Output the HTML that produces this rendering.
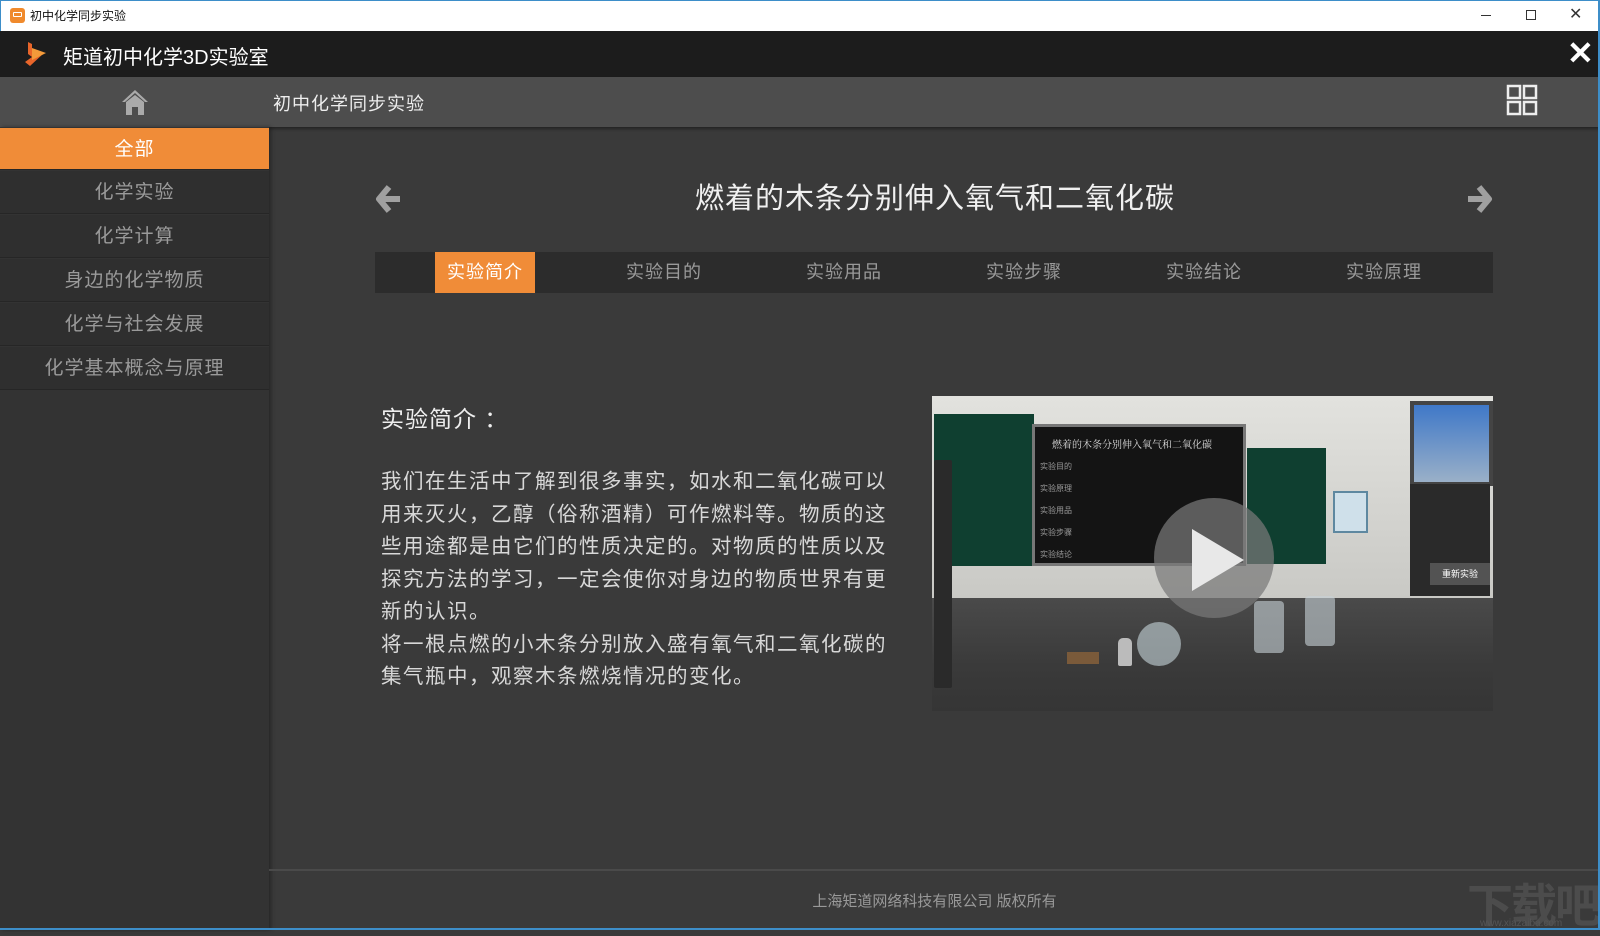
<!DOCTYPE html>
<html><head><meta charset="utf-8"><style>
*{margin:0;padding:0;box-sizing:border-box}
body{width:1600px;height:930px;overflow:hidden;background:#3a3a3a;font-family:"Liberation Sans","Noto Sans CJK SC",sans-serif;position:relative}
.abs{position:absolute}
#tb{left:0;top:0;width:1600px;height:31px;background:#fff;border:1px solid #3d8ec9;border-bottom:none}
#hd{left:0;top:31px;width:1600px;height:46px;background:#1c1c1c}
#nav{left:0;top:77px;width:1600px;height:50px;background:#4d4d4d;box-shadow:0 2px 3px rgba(0,0,0,.4)}
#side{left:0;top:127px;width:269px;height:803px;background:#333;box-shadow:2px 0 4px rgba(0,0,0,.35)}
.it{position:absolute;left:0;width:269px;height:43px;background:#2f2f2f;color:#9a9a9a;font-size:19px;letter-spacing:1px;text-align:center;line-height:43px;border-bottom:1px solid #262626}
.tab{position:absolute;top:0;height:41px;line-height:41px;font-size:18px;letter-spacing:1px;color:#9a9a9a;text-align:center;width:100px}
p.t{position:absolute;left:381px;top:466px;width:510px;font-size:20.5px;letter-spacing:1.5px;line-height:32.5px;color:#d8d8d8}
</style></head><body>
<div id="tb" class="abs">
 <div class="abs" style="left:9px;top:7px;width:15px;height:15px;background:#f08a2c;border-radius:3px"><div style="margin:4px 3px;width:9px;height:5px;border:1px solid #fff;border-radius:1px"></div></div>
 <div class="abs" style="left:29px;top:6px;font-size:12px;color:#111">初中化学同步实验</div>
 <div class="abs" style="left:1480px;top:14px;width:10px;height:1px;background:#333"></div>
 <div class="abs" style="left:1525px;top:9px;width:10px;height:10px;border:1px solid #333"></div>
 <div class="abs" style="left:1568px;top:3px;font-size:16px;color:#333">✕</div>
</div>
<div id="hd" class="abs">
 <svg class="abs" style="left:22px;top:9px" width="28" height="28" viewBox="0 0 28 28"><path d="M6 2 L10 4 L10 14 L22 13 L8 26 L3 22 L10 17 L6 14Z" fill="#e8652a"/><path d="M10 8 L24 13 L10 20Z" fill="#f39a3a"/></svg>
 <div class="abs" style="left:63px;top:10px;font-size:20px;color:#fff">矩道初中化学3D实验室</div>
 <div class="abs" style="left:1567px;top:3px;font-size:32px;color:#fff;font-weight:bold">✕</div>
</div>
<div id="nav" class="abs">
 <svg class="abs" style="left:120px;top:10px" width="30" height="30" viewBox="0 0 30 30"><path d="M15 3 L28 15 L25 15 L15 6 L5 15 L2 15Z" fill="#aaa"/><path d="M6 15 L15 8 L24 15 L24 28 L18 28 L18 20 L12 20 L12 28 L6 28Z" fill="#aaa"/></svg>
 <div class="abs" style="left:273px;top:13px;font-size:18px;letter-spacing:1px;color:#eee">初中化学同步实验</div>
 <svg class="abs" style="left:1506px;top:7px" width="32" height="32" viewBox="0 0 32 32" fill="none" stroke="#eee" stroke-width="2.5"><rect x="2" y="2" width="12" height="12"/><rect x="18" y="2" width="12" height="12"/><rect x="2" y="18" width="12" height="12"/><rect x="18" y="18" width="12" height="12"/></svg>
</div>
<div id="side" class="abs">
 <div class="it" style="top:1px;background:#f08c38;color:#fff;height:42px">全部</div>
 <div class="it" style="top:44px">化学实验</div>
 <div class="it" style="top:88px">化学计算</div>
 <div class="it" style="top:132px">身边的化学物质</div>
 <div class="it" style="top:176px">化学与社会发展</div>
 <div class="it" style="top:220px">化学基本概念与原理</div>
</div>
<svg class="abs" style="left:375px;top:184px" width="28" height="30" viewBox="0 0 28 30"><path d="M14 3 L4 15 L14 27 M4 15 L25 15" stroke="#a0a0a0" stroke-width="6" fill="none" stroke-linejoin="round"/></svg>
<svg class="abs" style="left:1465px;top:184px" width="28" height="30" viewBox="0 0 28 30"><path d="M14 3 L24 15 L14 27 M24 15 L3 15" stroke="#a0a0a0" stroke-width="6" fill="none" stroke-linejoin="round"/></svg>
<div class="abs" style="left:600px;top:175px;width:670px;text-align:center;font-size:29px;letter-spacing:1px;color:#f0f0f0">燃着的木条分别伸入氧气和二氧化碳</div>
<div class="abs" style="left:375px;top:252px;width:1118px;height:41px;background:#2c2c2c">
 <div class="tab" style="left:60px;background:#f08c38;color:#fff">实验简介</div>
 <div class="tab" style="left:239px">实验目的</div>
 <div class="tab" style="left:419px">实验用品</div>
 <div class="tab" style="left:599px">实验步骤</div>
 <div class="tab" style="left:779px">实验结论</div>
 <div class="tab" style="left:959px">实验原理</div>
</div>
<div class="abs" style="left:381px;top:400px;font-size:23px;letter-spacing:1px;color:#eee">实验简介 ：</div>
<p class="t">我们在生活中了解到很多事实，如水和二氧化碳可以用来灭火，乙醇（俗称酒精）可作燃料等。物质的这些用途都是由它们的性质决定的。对物质的性质以及探究方法的学习，一定会使你对身边的物质世界有更新的认识。<br>将一根点燃的小木条分别放入盛有氧气和二氧化碳的集气瓶中，观察木条燃烧情况的变化。</p>
<div class="abs" style="left:932px;top:396px;width:561px;height:315px;background:#d4d4d0;overflow:hidden">
 <div class="abs" style="left:0;top:0;width:561px;height:210px;background:linear-gradient(#e2e2de,#c8c8c4)"></div>
 <div class="abs" style="left:0;top:202px;width:561px;height:113px;background:linear-gradient(#4a4a4a,#3a3a3a 60%,#353535)"></div>
 <div class="abs" style="left:2px;top:18px;width:100px;height:152px;background:#0f3f30"></div>
 <div class="abs" style="left:100px;top:28px;width:214px;height:142px;background:#141414;border:3px solid #777"></div>
 <div class="abs" style="left:120px;top:40px;font-size:10px;color:#ddd;font-family:'Noto Serif CJK SC',serif">燃着的木条分别伸入氧气和二氧化碳</div>
 <div class="abs" style="left:108px;top:60px;font-size:8px;color:#999;line-height:22px;width:40px">实验目的<br>实验原理<br>实验用品<br>实验步骤<br>实验结论</div>
 <div class="abs" style="left:315px;top:52px;width:79px;height:116px;background:#0f3f30"></div>
 <div class="abs" style="left:401px;top:95px;width:35px;height:42px;background:#cfe0ea;border:2px solid #5e88a0"></div>
 <div class="abs" style="left:478px;top:5px;width:83px;height:85px;background:linear-gradient(#3f78c8,#9ab0c8);border:4px solid #444"></div>
 <div class="abs" style="left:478px;top:88px;width:80px;height:112px;background:#2a2a2a"></div>
 <div class="abs" style="left:498px;top:167px;width:60px;height:22px;background:rgba(90,90,90,.85);color:#fff;font-size:9px;line-height:22px;text-align:center">重新实验</div>
 <div class="abs" style="left:2px;top:64px;width:18px;height:228px;background:#2a2a2a;border-radius:2px"></div>
 <div class="abs" style="left:135px;top:256px;width:32px;height:12px;background:#7a5a3a"></div>
 <div class="abs" style="left:186px;top:242px;width:14px;height:28px;background:#bbb;border-radius:5px 5px 2px 2px"></div>
 <div class="abs" style="left:205px;top:226px;width:44px;height:44px;background:rgba(200,215,220,.6);border-radius:50%"></div>
 <div class="abs" style="left:322px;top:205px;width:30px;height:52px;background:rgba(200,210,215,.6);border-radius:4px"></div>
 <div class="abs" style="left:373px;top:200px;width:30px;height:50px;background:rgba(200,210,215,.6);border-radius:4px"></div>
 <div class="abs" style="left:222px;top:102px;width:120px;height:120px;border-radius:50%;background:rgba(120,120,120,.72)"></div>
 <svg class="abs" style="left:258px;top:131px" width="56" height="66" viewBox="0 0 56 66"><path d="M2 2 L54 33 L2 64Z" fill="#e8e8e8"/></svg>
</div>
<div class="abs" style="left:269px;top:869px;width:1331px;height:2px;background:#4a4a4a"></div>
<div class="abs" style="left:269px;top:890px;width:1331px;text-align:center;font-size:15px;color:#999">上海矩道网络科技有限公司 版权所有</div>
<div class="abs" style="left:1467px;top:870px;font-size:46px;color:#4c4c4c;font-weight:bold;letter-spacing:-2px">下载吧</div>
<div class="abs" style="left:1480px;top:918px;font-size:10px;color:#555">www.xiazaiba.com</div>
<div class="abs" style="left:1598px;top:0;width:2px;height:930px;background:#3d8ec9"></div>
<div class="abs" style="left:0;top:928px;width:1600px;height:2px;background:#3d8ec9"></div>
</body></html>
